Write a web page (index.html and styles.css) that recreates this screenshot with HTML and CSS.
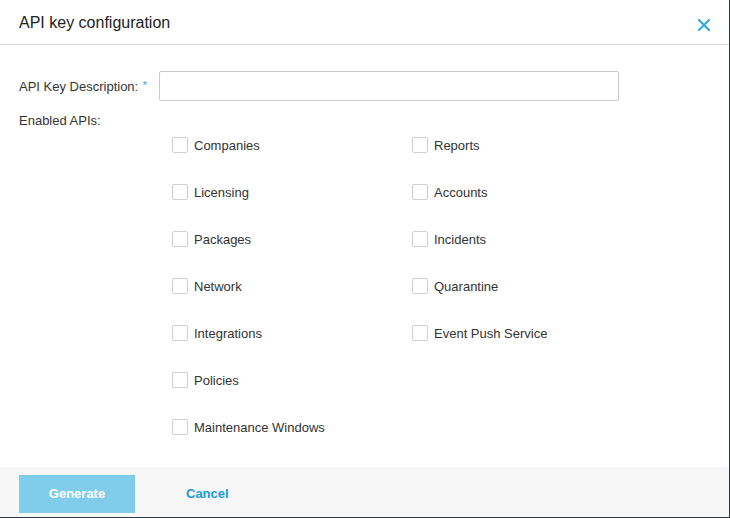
FILE: index.html
```html
<!DOCTYPE html>
<html>
<head>
<meta charset="utf-8">
<link rel="stylesheet" href="styles.css">
</head>
<body>
<div class="dialog">
  <div class="header">
    <div class="title">API key configuration</div>
    <svg class="close" width="12" height="12" viewBox="0 0 12 12"><path d="M1 1L11 11M11 1L1 11" stroke="#29abe2" stroke-width="2" stroke-linecap="square"/></svg>
  </div>
  <div class="body">
    <div class="field">
      <label class="label">API Key Description: <span class="req">*</span></label>
      <input class="input" type="text">
    </div>
    <div class="label section">Enabled APIs:</div>
    <div class="apis">
      <div class="item"><span class="box"></span>Companies</div>
      <div class="item"><span class="box"></span>Licensing</div>
      <div class="item"><span class="box"></span>Packages</div>
      <div class="item"><span class="box"></span>Network</div>
      <div class="item"><span class="box"></span>Integrations</div>
      <div class="item"><span class="box"></span>Policies</div>
      <div class="item"><span class="box"></span>Maintenance Windows</div>
      <div class="item"><span class="box"></span>Reports</div>
      <div class="item"><span class="box"></span>Accounts</div>
      <div class="item"><span class="box"></span>Incidents</div>
      <div class="item"><span class="box"></span>Quarantine</div>
      <div class="item"><span class="box"></span>Event Push Service</div>
    </div>
  </div>
  <div class="footer">
    <button class="btn-primary">Generate</button>
    <button class="btn-link">Cancel</button>
  </div>
</div>
</body>
</html>
```
FILE: styles.css
```css
html, body {
  margin: 0;
  padding: 0;
  background: #2b3a43;
  font-family: "Liberation Sans", Arial, sans-serif;
}
.dialog {
  width: 729px;
  height: 517px;
  background: #fff;
  display: flex;
  flex-direction: column;
}
.header {
  height: 44px;
  border-bottom: 1px solid #dcdcdc;
  display: flex;
  align-items: center;
  justify-content: space-between;
  padding: 0 19px;
  flex-shrink: 0;
}
.title {
  font-size: 16px;
  color: #222;
  padding-top: 1px;
}
.close {
  margin-top: 6px;
}
.body {
  flex: 1;
  padding: 26px 19px 0 19px;
}
.field {
  display: flex;
  align-items: center;
}
.label {
  font-size: 13px;
  color: #333;
  line-height: 16px;
}
.field .label {
  width: 140px;
  flex-shrink: 0;
}
.req {
  color: #29abe2;
  font-size: 11px;
  vertical-align: 2px;
  margin-left: 1px;
}
.input {
  width: 460px;
  height: 30px;
  box-sizing: border-box;
  border: 1px solid #c8c8c8;
  border-radius: 2px;
  margin: 0;
  padding: 0 8px;
  font-family: inherit;
  font-size: 13px;
}
.section {
  margin-top: 12px;
}
.apis {
  margin-top: 8px;
  padding-left: 153px;
  display: grid;
  grid-template-rows: repeat(7, 16px);
  grid-template-columns: 240px 240px;
  grid-auto-flow: column;
  row-gap: 31px;
}
.item {
  display: flex;
  align-items: center;
  font-size: 13px;
  color: #333;
  height: 16px;
}
.box {
  width: 16px;
  height: 16px;
  box-sizing: border-box;
  border: 1px solid #cfcfcf;
  border-radius: 2px;
  margin-right: 6px;
  background: #fff;
}
.footer {
  height: 50px;
  flex-shrink: 0;
  background: #f7f7f7;
  display: flex;
  align-items: flex-start;
  padding: 8px 19px 0 19px;
  box-sizing: border-box;
}
.btn-primary {
  width: 116px;
  height: 38px;
  border: none;
  background: #7fcdea;
  color: #fff;
  font-family: inherit;
  font-weight: bold;
  font-size: 13px;
  margin: 0;
  padding: 0 0 2px 0;
}
.btn-link {
  border: none;
  background: none;
  color: #1a9ad6;
  font-family: inherit;
  font-weight: bold;
  font-size: 13px;
  height: 38px;
  margin: 0 0 0 51px;
  padding: 0 0 2px 0;
}
```
